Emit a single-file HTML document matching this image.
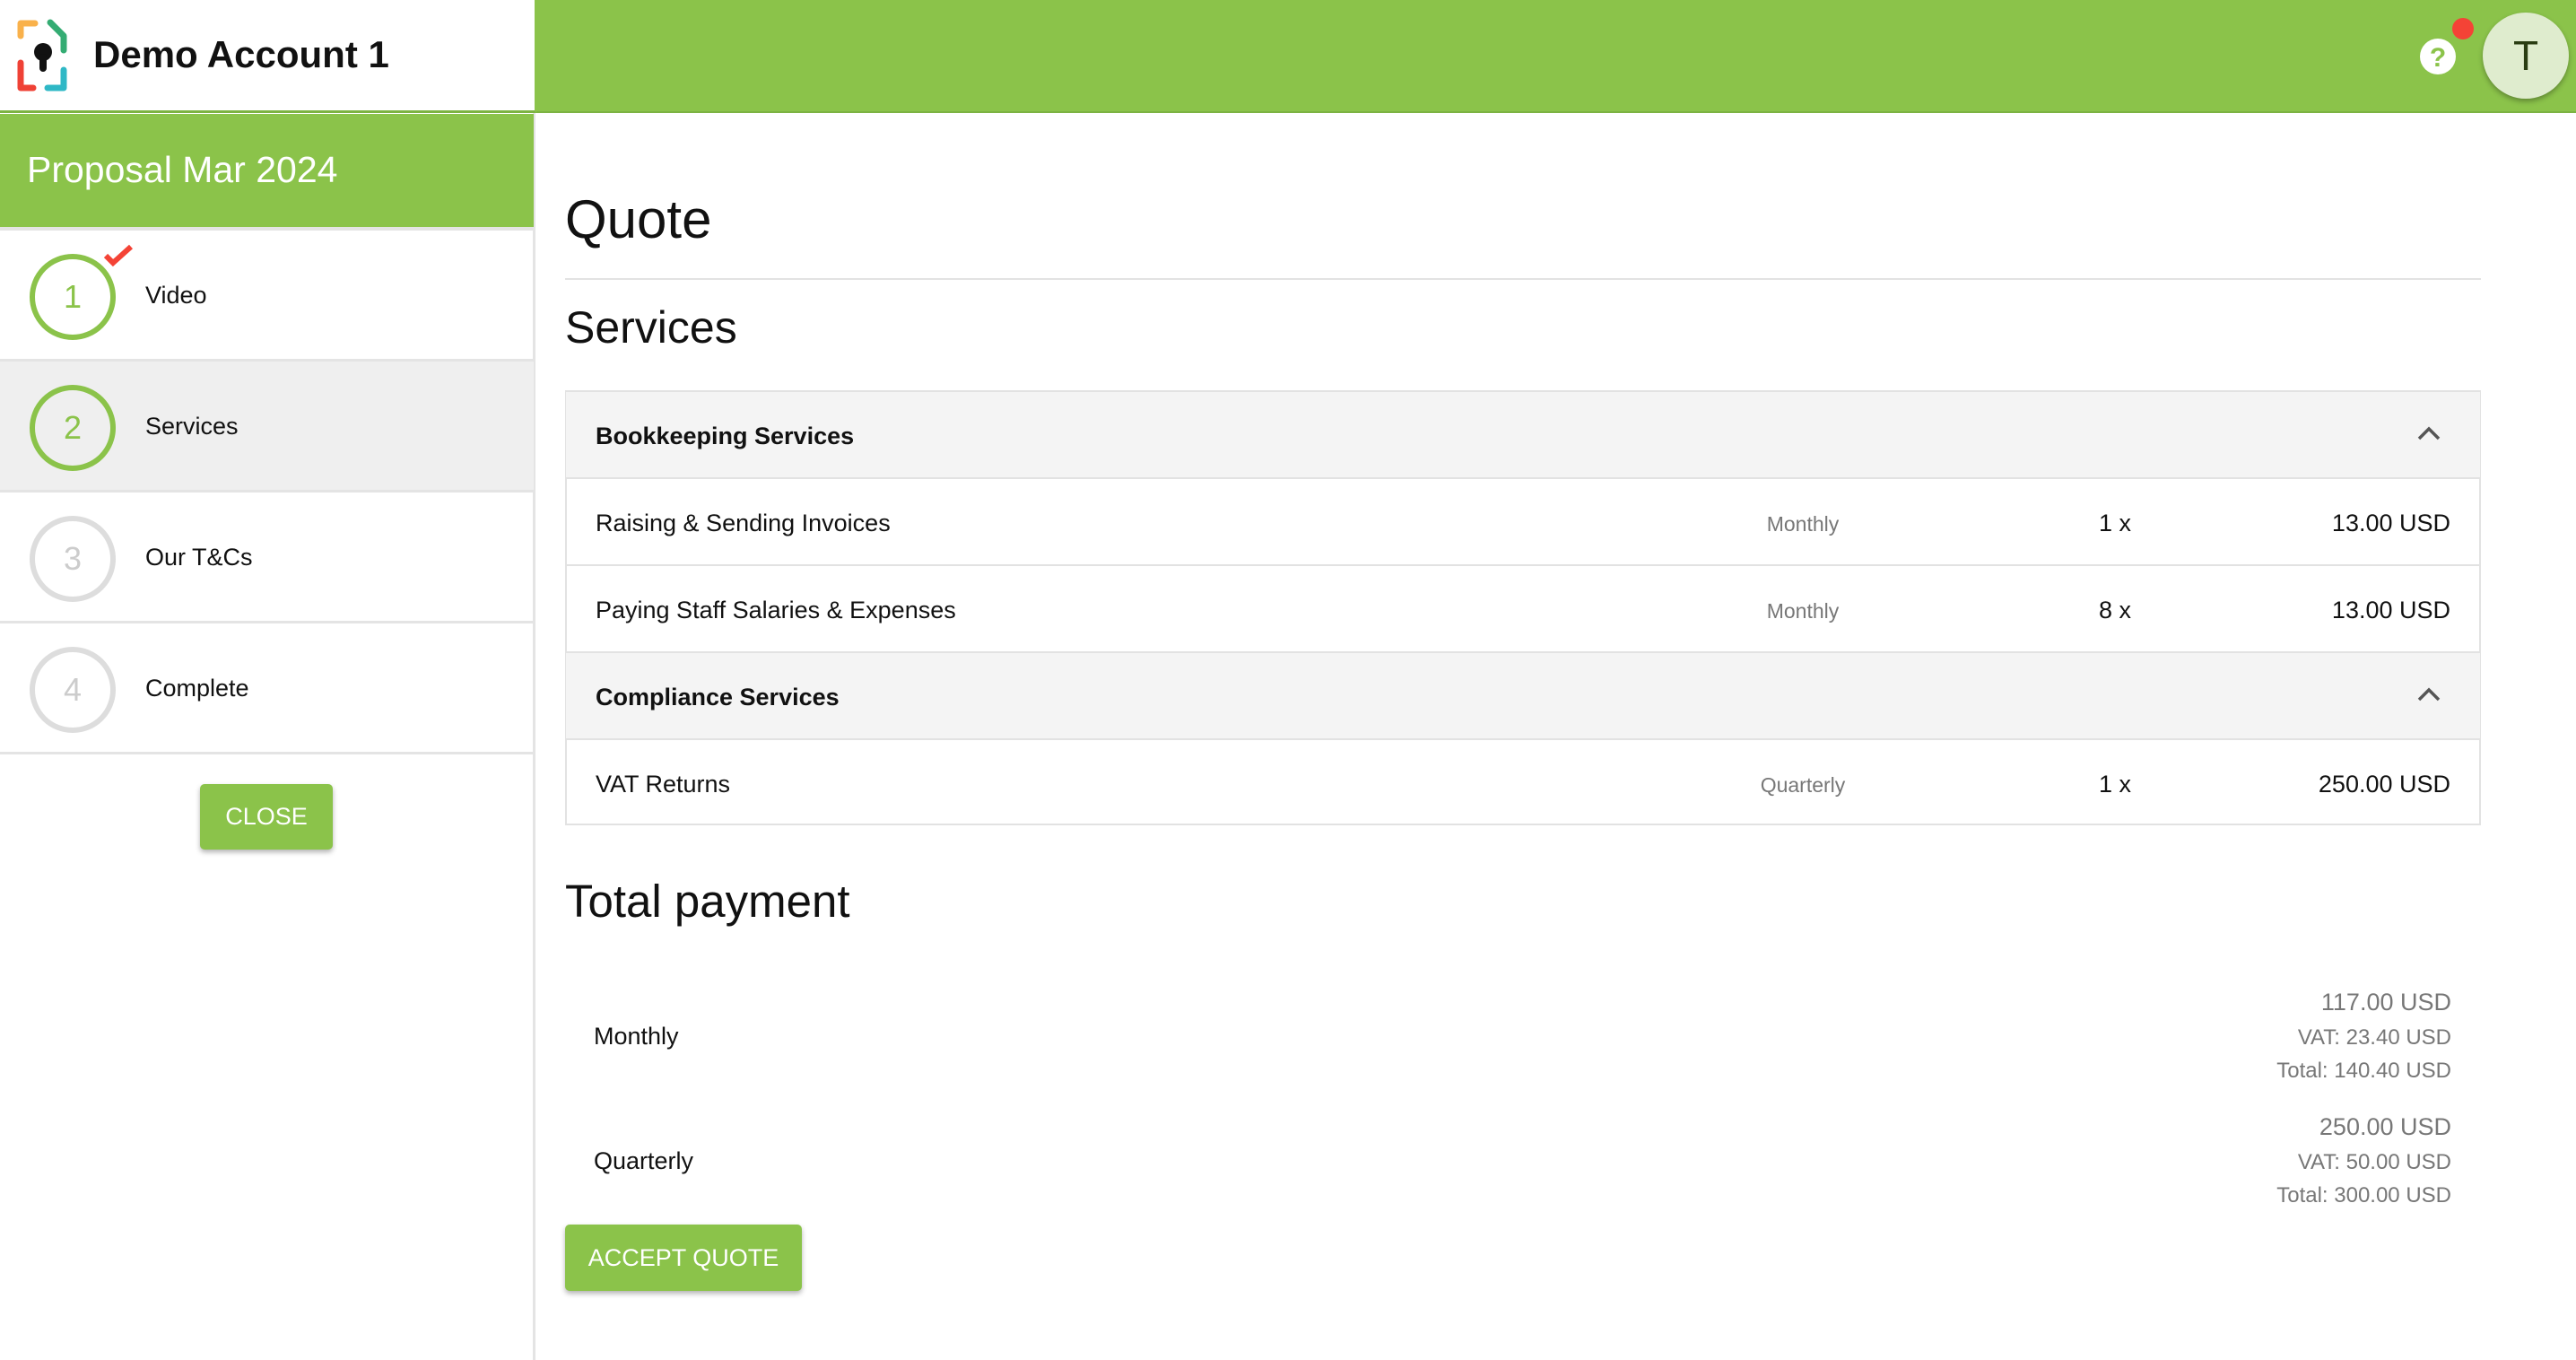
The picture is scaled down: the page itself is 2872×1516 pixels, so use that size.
<!DOCTYPE html>
<html><head><meta charset="utf-8"><style>
*{margin:0;padding:0;box-sizing:border-box}
body{width:2872px;height:1516px;overflow:hidden;background:#fff;font-family:"Liberation Sans",sans-serif;color:#111;position:relative}
.a{position:absolute}
.topbar{left:598px;top:0;width:2274px;height:126px;background:#8bc34a;border-bottom:2px solid #7cb342}
.logo{left:0;top:0;width:598px;height:126px;background:#fff;border-bottom:3px solid #7cb342;border-right:2px solid #8bc34a}
.side{left:0;top:126px;width:597px;height:1390px;border-right:3px solid #e4e4e4;background:#fff}
.prop{left:0;top:127px;width:595px;height:130px;background:#8bc34a;color:#fff;font-size:41px;padding:39px 0 0 30px;border-bottom:4px solid #e4e4e4}
.step{left:0;width:595px;height:146px;border-bottom:3px solid #e4e4e4;font-size:27px}
.step .c{position:absolute;left:33px;top:26px;width:96px;height:96px;border-radius:50%;border:6px solid #8bc34a;color:#8bc34a;font-size:36px;text-align:center;line-height:84px}
.step .c.g{border-color:#ddd;color:#ccc}
.step .t{position:absolute;left:162px;top:57px}
.btn{background:#8bc34a;color:#fff;font-size:27px;text-align:center;border-radius:5px;box-shadow:0 3px 6px rgba(0,0,0,.3)}
.row{left:631px;width:2134px;height:97px;border-bottom:2px solid #e2e2e2;font-size:27px}
.row span{position:absolute;top:34px}
.hd{background:#f4f4f4;font-weight:bold}
.row .fr{color:#777;font-size:23px;width:200px;text-align:center;left:1279px;top:37px}
.row .q{left:1709px}
.row .p{right:33px}
.r{right:139px;text-align:right;color:#777}
</style></head><body>
<div class="a topbar"></div>
<div class="a logo">
<svg class="a" style="left:18px;top:20px" width="62" height="84" viewBox="0 0 62 84">
<path d="M5 20V6h16" stroke="#f9b14b" stroke-width="7" fill="none" stroke-linecap="round" stroke-linejoin="round"/>
<path d="M38 5l15 15v16" stroke="#34ac73" stroke-width="7" fill="none" stroke-linecap="round" stroke-linejoin="round"/>
<path d="M5 50v28h14" stroke="#ef4136" stroke-width="7" fill="none" stroke-linecap="round" stroke-linejoin="round"/>
<path d="M35 78h18V58" stroke="#2fb8c6" stroke-width="7" fill="none" stroke-linecap="round" stroke-linejoin="round"/>
<circle cx="30" cy="38" r="10" fill="#111"/><rect x="26" y="40" width="8" height="20" rx="4" fill="#111"/>
</svg>
<div class="a" style="left:104px;top:37px;font-size:42px;font-weight:bold">Demo Account 1</div>
</div>
<svg class="a" style="left:2697px;top:42px" width="42" height="42"><circle cx="21" cy="21" r="20" fill="#fff"/><text x="21" y="32" font-size="30" font-weight="bold" fill="#8bc34a" text-anchor="middle" font-family="Liberation Sans">?</text></svg>
<div class="a" style="left:2734px;top:20px;width:24px;height:24px;border-radius:50%;background:#f44336"></div>
<div class="a" style="left:2768px;top:14px;width:96px;height:96px;border-radius:50%;background:#dfecce;box-shadow:0 3px 6px rgba(0,0,0,.3);color:#2a3d12;font-size:46px;text-align:center;line-height:96px">T</div>

<div class="a side"></div>
<div class="a prop">Proposal Mar 2024</div>
<div class="a step" style="top:257px"><div class="c">1</div><div class="t">Video</div>
<svg class="a" style="left:114px;top:14px" width="36" height="28"><path d="M4 14l8 8 20-18" stroke="#f44336" stroke-width="6" fill="none"/></svg></div>
<div class="a step" style="top:403px;background:#efefef"><div class="c">2</div><div class="t">Services</div></div>
<div class="a step" style="top:549px"><div class="c g">3</div><div class="t">Our T&amp;Cs</div></div>
<div class="a step" style="top:695px"><div class="c g">4</div><div class="t">Complete</div></div>
<div class="a btn" style="left:223px;top:874px;width:148px;height:73px;line-height:73px">CLOSE</div>

<div class="a" style="left:630px;top:210px;font-size:60px;font-weight:300">Quote</div>
<div class="a" style="left:630px;top:310px;width:2136px;height:2px;background:#e2e2e2"></div>
<div class="a" style="left:630px;top:336px;font-size:50px">Services</div>
<div class="a" style="left:630px;top:435px;width:2136px;height:485px;border:2px solid #e2e2e2"></div>
<div class="a row hd" style="top:437px"><span style="left:33px">Bookkeeping Services</span>
<svg class="a" style="left:2062px;top:36px" width="30" height="20"><path d="M4 16l11-11 11 11" stroke="#555" stroke-width="3.5" fill="none"/></svg></div>
<div class="a row" style="top:534px"><span style="left:33px">Raising &amp; Sending Invoices</span><span class="fr">Monthly</span><span class="q">1 x</span><span class="p">13.00 USD</span></div>
<div class="a row" style="top:631px"><span style="left:33px">Paying Staff Salaries &amp; Expenses</span><span class="fr">Monthly</span><span class="q">8 x</span><span class="p">13.00 USD</span></div>
<div class="a row hd" style="top:728px"><span style="left:33px">Compliance Services</span>
<svg class="a" style="left:2062px;top:36px" width="30" height="20"><path d="M4 16l11-11 11 11" stroke="#555" stroke-width="3.5" fill="none"/></svg></div>
<div class="a row" style="top:825px;border:none"><span style="left:33px">VAT Returns</span><span class="fr">Quarterly</span><span class="q">1 x</span><span class="p">250.00 USD</span></div>

<div class="a" style="left:630px;top:975px;font-size:51px">Total payment</div>
<div class="a" style="left:662px;top:1140px;font-size:27px">Monthly</div>
<div class="a r" style="top:1102px;font-size:27px">117.00 USD</div>
<div class="a r" style="top:1143px;font-size:24px">VAT: 23.40 USD</div>
<div class="a r" style="top:1180px;font-size:24px">Total: 140.40 USD</div>
<div class="a" style="left:662px;top:1279px;font-size:27px">Quarterly</div>
<div class="a r" style="top:1241px;font-size:27px">250.00 USD</div>
<div class="a r" style="top:1282px;font-size:24px">VAT: 50.00 USD</div>
<div class="a r" style="top:1319px;font-size:24px">Total: 300.00 USD</div>
<div class="a btn" style="left:630px;top:1365px;width:264px;height:74px;line-height:74px">ACCEPT QUOTE</div>
</body></html>
